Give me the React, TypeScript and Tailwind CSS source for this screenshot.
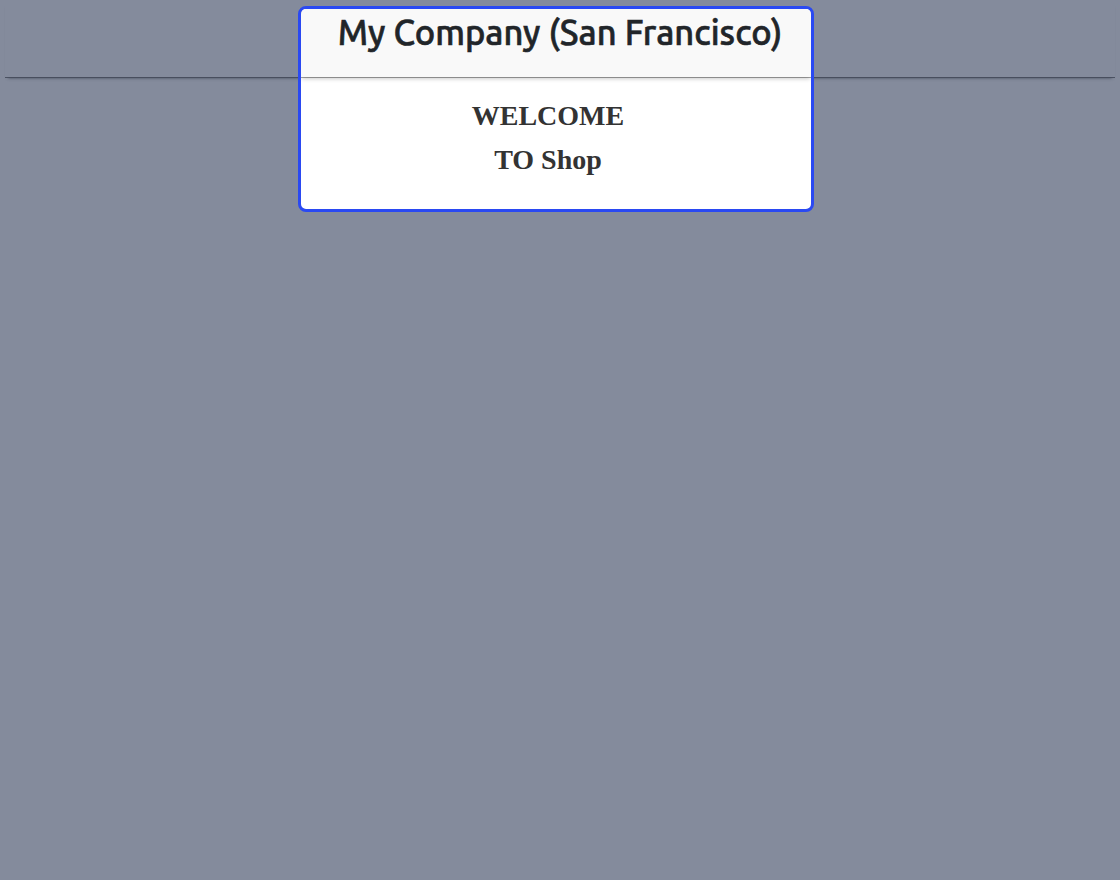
export default function App() {
    return (
        <div className="min-h-screen bg-[#848b9c]">
            <header className="relative mx-[5px] flex h-[77px] justify-center shadow-[0_1px_0_rgba(70,76,92,0.9),0_4px_3px_-3px_rgba(40,46,60,0.7)]">
                <div className="ml-[-8px] mt-[6px] h-[206px] w-[516px] self-start overflow-hidden rounded-[8px] border-[3px] border-[#2a49f2] bg-white">
                    <div className="flex h-[68px] justify-center bg-[#f9f9f9] pl-[8px] pt-[2px] shadow-[0_1px_0_rgba(0,0,0,0.35),0_3px_4px_-1px_rgba(0,0,0,0.2)]">
                        <h1 className="font-['Ubuntu','Open_Sans',sans-serif] text-[34.5px] font-medium leading-[44px] text-[#212529] [-webkit-text-stroke:0.6px_#212529]">
                            My Company (San Francisco)
                        </h1>
                    </div>
                    <div className="pr-[16px] pt-[17px] text-center font-['Liberation_Serif',serif] text-[28px] font-bold leading-[44px] text-[#333333]">
                        <div>WELCOME</div>
                        <div>TO Shop</div>
                    </div>
                </div>
            </header>
        </div>
    );
}
